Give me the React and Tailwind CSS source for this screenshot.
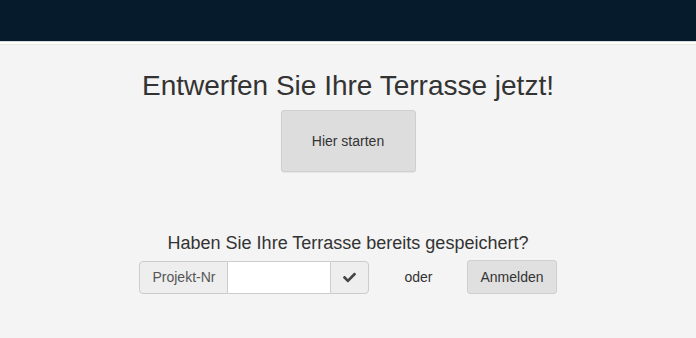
import React from 'react';
import { FaCheck } from 'react-icons/fa';

const App = () => {
  return (
    <div className="min-h-screen bg-[#f4f4f4] text-[#333] font-['Liberation_Sans',Arial,sans-serif]">
      {/* Top bar */}
      <div className="h-[41px] bg-[#061b2b]" />
      <div className="h-[1px] bg-[#d6dada]" />
      <div className="h-[2px] bg-white" />
      <div className="h-[1px] bg-[#ede9df]" />

      {/* Hero */}
      <div className="flex flex-col items-center pt-[26px]">
        <h1 className="text-[28px] leading-[30px] font-normal">Entwerfen Sie Ihre Terrasse jetzt!</h1>
        <button className="mt-[9px] w-[135px] h-[62px] bg-[#dddddd] border border-[#cfcfcf] rounded-[3px] text-[14px] text-[#333] shadow-[0_1px_1px_rgba(0,0,0,0.06)]">
          Hier starten
        </button>
      </div>

      {/* Load saved project */}
      <div className="flex flex-col items-center mt-[61px]">
        <h2 className="text-[18px] leading-[20px] font-normal">Haben Sie Ihre Terrasse bereits gespeichert?</h2>
        <div className="mt-[7px] flex items-center gap-[35px]">
          <div className="flex h-[33px] w-[230px] text-[14px]">
            <span className="flex items-center px-[12px] bg-[#eeeeee] border border-[#cccccc] rounded-l-[4px] text-[#555]">
              Projekt-Nr
            </span>
            <input className="w-[102px] bg-white border-y border-[#cccccc] outline-none px-2" />
            <button className="flex items-center justify-center flex-1 bg-[#eeeeee] border border-[#cccccc] rounded-r-[4px] text-[#444]">
              <FaCheck className="w-[13px] h-[13px]" />
            </button>
          </div>
          <span className="text-[14px] text-[#333]">oder</span>
          <button className="h-[34px] px-[12px] bg-[#e0e0e0] border border-[#cfcfcf] rounded-[3px] text-[14px] text-[#333]">
            Anmelden
          </button>
        </div>
      </div>
    </div>
  );
};

export default App;
